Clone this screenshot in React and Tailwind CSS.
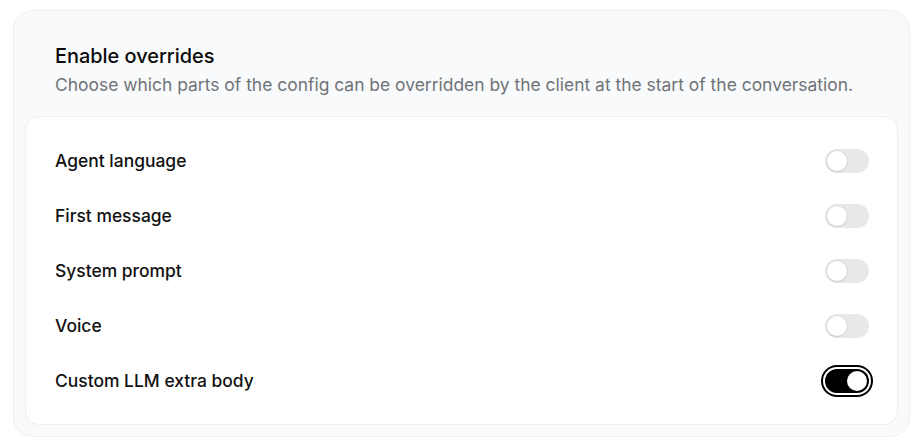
import React from "react";

function Toggle({ on }) {
  return (
    <div
      className={
        "flex h-6 w-11 items-center rounded-full p-[2px] " +
        (on
          ? "justify-end bg-black ring-2 ring-black ring-offset-2 ring-offset-white"
          : "justify-start bg-[#e7e8ea]")
      }
    >
      <div
        className={
          "h-5 w-5 rounded-full bg-white " +
          (on ? "" : "shadow-[0_0_0_1px_rgba(0,0,0,0.04),0_1px_2px_rgba(0,0,0,0.08)]")
        }
      />
    </div>
  );
}

const rows = [
  ["Agent language", false],
  ["First message", false],
  ["System prompt", false],
  ["Voice", false],
  ["Custom LLM extra body", true],
];

export default function App() {
  return (
    <div
      className="min-h-[442px] w-[921px] bg-white pl-[13px] pr-[11px] pt-[10px]"
      style={{ fontFamily: "Inter, 'Noto Sans', sans-serif" }}
    >
      <div className="rounded-[20px] border border-[#eef0f2] bg-[#f9fafb] p-[11px]">
        <div className="px-[30px] pb-[19px] pt-[20px]">
          <div className="text-[19.9px] font-medium leading-[28px] text-[#0a0a0a]">
            Enable overrides
          </div>
          <div className="mt-[3px] text-[17.46px] leading-[24px] text-[#6f7378]">
            Choose which parts of the config can be overridden by the client at the start of the conversation.
          </div>
        </div>
        <div className="rounded-[14px] border border-[#eceef0] bg-white py-4 pl-[29px] pr-[28px]">
          {rows.map(([label, on]) => (
            <div key={label} className="flex h-[55px] items-center justify-between">
              <span className="text-[17.45px] font-medium leading-[24px] text-[#111111]">{label}</span>
              <Toggle on={on} />
            </div>
          ))}
        </div>
      </div>
    </div>
  );
}
